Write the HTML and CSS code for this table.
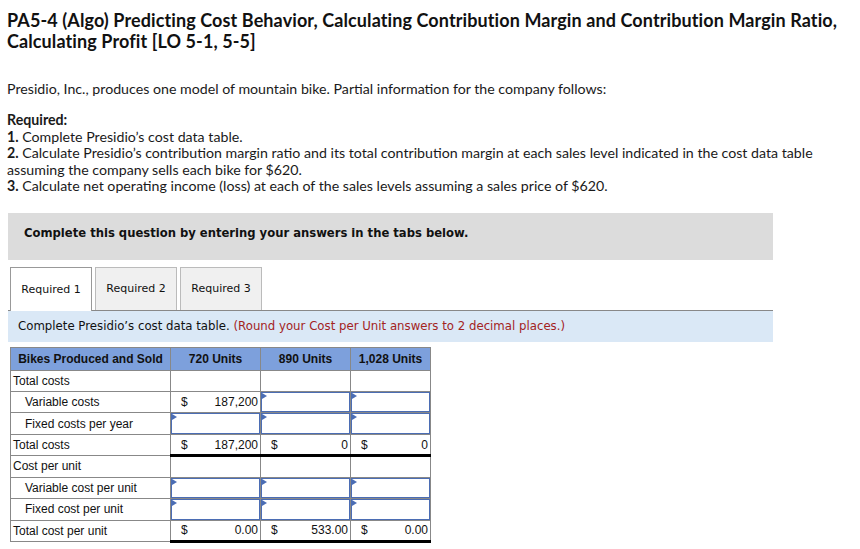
FILE: index.html
```html
<!DOCTYPE html>
<html>
<head>
<meta charset="utf-8">
<link rel="stylesheet" href="styles.css">
</head>
<body>
<div class="page">
  <h1 class="title">PA5-4 (Algo) Predicting Cost Behavior, Calculating Contribution Margin and Contribution Margin Ratio, Calculating Profit [LO 5-1, 5-5]</h1>
  <p class="intro">Presidio, Inc., produces one model of mountain bike. Partial information for the company follows:</p>
  <div class="req">
    <div class="req-head">Required:</div>
    <div><b>1.</b> Complete Presidio’s cost data table.</div>
    <div><b>2.</b> Calculate Presidio’s contribution margin ratio and its total contribution margin at each sales level indicated in the cost data table assuming the company sells each bike for $620.</div>
    <div><b>3.</b> Calculate net operating income (loss) at each of the sales levels assuming a sales price of $620.</div>
  </div>
  <div class="banner">Complete this question by entering your answers in the tabs below.</div>
  <div class="tabs">
    <div class="tab active">Required 1</div>
    <div class="tab">Required 2</div>
    <div class="tab">Required 3</div>
  </div>
  <div class="instr">Complete Presidio’s cost data table. <span class="red">(Round your Cost per Unit answers to 2 decimal places.)</span></div>
  <table class="grid">
    <tr class="hdr">
      <th class="lbl">Bikes Produced and Sold</th>
      <th>720 Units</th>
      <th>890 Units</th>
      <th>1,028 Units</th>
    </tr>
    <tr>
      <td class="lbl">Total costs</td><td></td><td></td><td></td>
    </tr>
    <tr>
      <td class="lbl ind">Variable costs</td>
      <td class="val"><span class="cur">$</span><span class="num">187,200</span></td>
      <td class="inp"><div class="box"></div></td>
      <td class="inp"><div class="box"></div></td>
    </tr>
    <tr>
      <td class="lbl ind">Fixed costs per year</td>
      <td class="inp"><div class="box"></div></td>
      <td class="inp"><div class="box"></div></td>
      <td class="inp"><div class="box"></div></td>
    </tr>
    <tr class="total">
      <td class="lbl">Total costs</td>
      <td class="val"><span class="cur">$</span><span class="num">187,200</span></td>
      <td class="val"><span class="cur">$</span><span class="num">0</span></td>
      <td class="val"><span class="cur">$</span><span class="num">0</span></td>
    </tr>
    <tr>
      <td class="lbl">Cost per unit</td><td></td><td></td><td></td>
    </tr>
    <tr>
      <td class="lbl ind">Variable cost per unit</td>
      <td class="inp"><div class="box"></div></td>
      <td class="inp"><div class="box"></div></td>
      <td class="inp"><div class="box"></div></td>
    </tr>
    <tr>
      <td class="lbl ind">Fixed cost per unit</td>
      <td class="inp"><div class="box"></div></td>
      <td class="inp"><div class="box"></div></td>
      <td class="inp"><div class="box"></div></td>
    </tr>
    <tr class="total">
      <td class="lbl">Total cost per unit</td>
      <td class="val"><span class="cur">$</span><span class="num">0.00</span></td>
      <td class="val"><span class="cur">$</span><span class="num">533.00</span></td>
      <td class="val"><span class="cur">$</span><span class="num">0.00</span></td>
    </tr>
  </table>
</div>
</body>
</html>
```

FILE: styles.css
```css
* { box-sizing: border-box; }
html, body { margin: 0; padding: 0; background: #fff; }
body { color: #1a1a1a; font-family: "Lato", "Open Sans", sans-serif; }
.page { padding: 10px 10px 0 7px; width: 860px; }
.title {
  margin: 0;
  font-size: 18px;
  line-height: 21px;
  font-weight: 700;
  letter-spacing: 0.1px;
  color: #111;
}
.intro { margin: 28px 0 0; font-size: 14.2px; line-height: 17px; }
.req { margin-top: 15px; font-size: 14.2px; line-height: 16.5px; }
.req-head { font-weight: 700; }
.req b { font-weight: 700; }
.banner {
  margin: 18px 0 0 1px;
  width: 765px;
  height: 47px;
  background: #dcdcdc;
  padding: 13px 0 0 16px;
  font-family: "DejaVu Sans", Verdana, sans-serif;
  font-weight: 700;
  font-size: 11.6px;
  color: #111;
}
.tabs { display: flex; margin: 7px 0 0 3px; gap: 3px; height: 43px; align-items: flex-end; }
.tab {
  height: 43px;
  width: 82px;
  border: 1px solid #bbb;
  border-bottom: none;
  background: #f0f0f0;
  font-family: "DejaVu Sans", Verdana, sans-serif;
  font-size: 11px;
  display: flex; align-items: center; justify-content: center;
  color: #111;
}
.tab.active { background: #fff; border-color: #999; height: 44px; margin-bottom: -1px; position: relative; z-index: 1; }
.instr {
  margin-left: 1px;
  width: 765px;
  border-top: 1px solid #888;
  background: #dae8f6;
  height: 32px;
  padding: 8px 0 0 10px;
  font-family: "DejaVu Sans", Verdana, sans-serif;
  font-size: 11.75px;
  color: #111;
}
.red { color: #a3241e; }
.grid {
  margin: 5px 0 0 3px;
  border-collapse: collapse;
  font-family: "Liberation Sans", Arial, sans-serif;
  font-size: 12px;
  color: #111;
}
.grid th, .grid td { border: 1px solid #888; height: 21.4px; padding: 0; }
.grid th { background: #7da0dc; font-weight: 700; text-align: center; height: 23px; }
.grid th.lbl { width: 160px; }
.grid th:nth-child(n+2) { width: 90px; }
.grid th:last-child { width: 80px; }
.grid td.lbl { padding-left: 2px; text-align: left; }
.grid td.ind { padding-left: 14px; }
.grid td.val { padding: 0 2px 0 10px; }
.val { white-space: nowrap; }
.val .cur { float: left; }
.val .num { float: right; }
.grid tr.total td:not(.lbl) { border-bottom: 3px solid #000; }
.grid td.inp { padding: 0; position: relative; }
.box {
  height: 20.5px;
  border: 1.5px solid #4b6db4;
  position: relative;
}
.box::before {
  content: "";
  position: absolute;
  left: 0; top: 0;
  width: 0; height: 0;
  border-top: 3px solid transparent;
  border-bottom: 3px solid transparent;
  border-left: 5px solid #4b6db4;
}
```
